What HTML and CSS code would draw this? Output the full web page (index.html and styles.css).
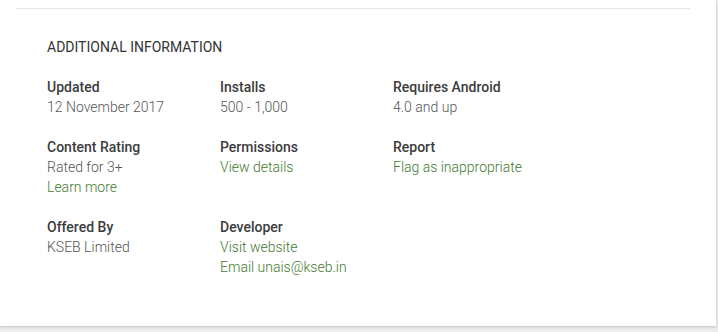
FILE: index.html
```html
<!DOCTYPE html>
<html>
<head>
<meta charset="utf-8">
<link rel="stylesheet" href="styles.css">
</head>
<body>
<div class="card">
  <div class="divider"></div>
  <section class="info">
    <h2 class="heading">ADDITIONAL INFORMATION</h2>
    <div class="grid">
      <div class="item">
        <div class="label">Updated</div>
        <div class="value">12 November 2017</div>
      </div>
      <div class="item">
        <div class="label">Installs</div>
        <div class="value">500 - 1,000</div>
      </div>
      <div class="item">
        <div class="label">Requires Android</div>
        <div class="value">4.0 and up</div>
      </div>
      <div class="item">
        <div class="label">Content Rating</div>
        <div class="value">Rated for 3+</div>
        <a class="link">Learn more</a>
      </div>
      <div class="item">
        <div class="label">Permissions</div>
        <a class="link">View details</a>
      </div>
      <div class="item">
        <div class="label">Report</div>
        <a class="link">Flag as inappropriate</a>
      </div>
      <div class="item">
        <div class="label">Offered By</div>
        <div class="value">KSEB Limited</div>
      </div>
      <div class="item">
        <div class="label">Developer</div>
        <a class="link">Visit website</a>
        <a class="link">Email unais@kseb.in</a>
      </div>
    </div>
  </section>
</div>
</body>
</html>
```

FILE: styles.css
```css
html, body {
  margin: 0;
  padding: 0;
}
body {
  background: #eeeeee;
  font-family: Roboto, "Liberation Sans", Arial, sans-serif;
  color: #333;
  height: 332px;
}
.card {
  width: 716px;
  height: 326px;
  background: #fff;
  box-shadow: 0 1px 3px rgba(0,0,0,0.2);
  box-sizing: border-box;
  padding-top: 8px;
}
.divider {
  margin: 0 26px 0 16px;
  height: 1px;
  background: #e6e6e6;
}
.info {
  padding: 28px 0 0 47px;
}
.heading {
  margin: 0;
  font-size: 14px;
  font-weight: 400;
  line-height: 20px;
  color: #333;
}
.grid {
  display: grid;
  grid-template-columns: 173px 173px 173px;
  row-gap: 20px;
  margin-top: 20px;
}
.item {
  display: flex;
  flex-direction: column;
}
.label {
  font-size: 14px;
  line-height: 20px;
  font-weight: 500;
  color: #3c3c3c;
}
.value {
  font-size: 14px;
  line-height: 20px;
  font-weight: 300;
  color: #555;
}
.link {
  font-size: 14px;
  line-height: 20px;
  font-weight: 300;
  color: #3f7a2f;
  text-decoration: none;
}
```
